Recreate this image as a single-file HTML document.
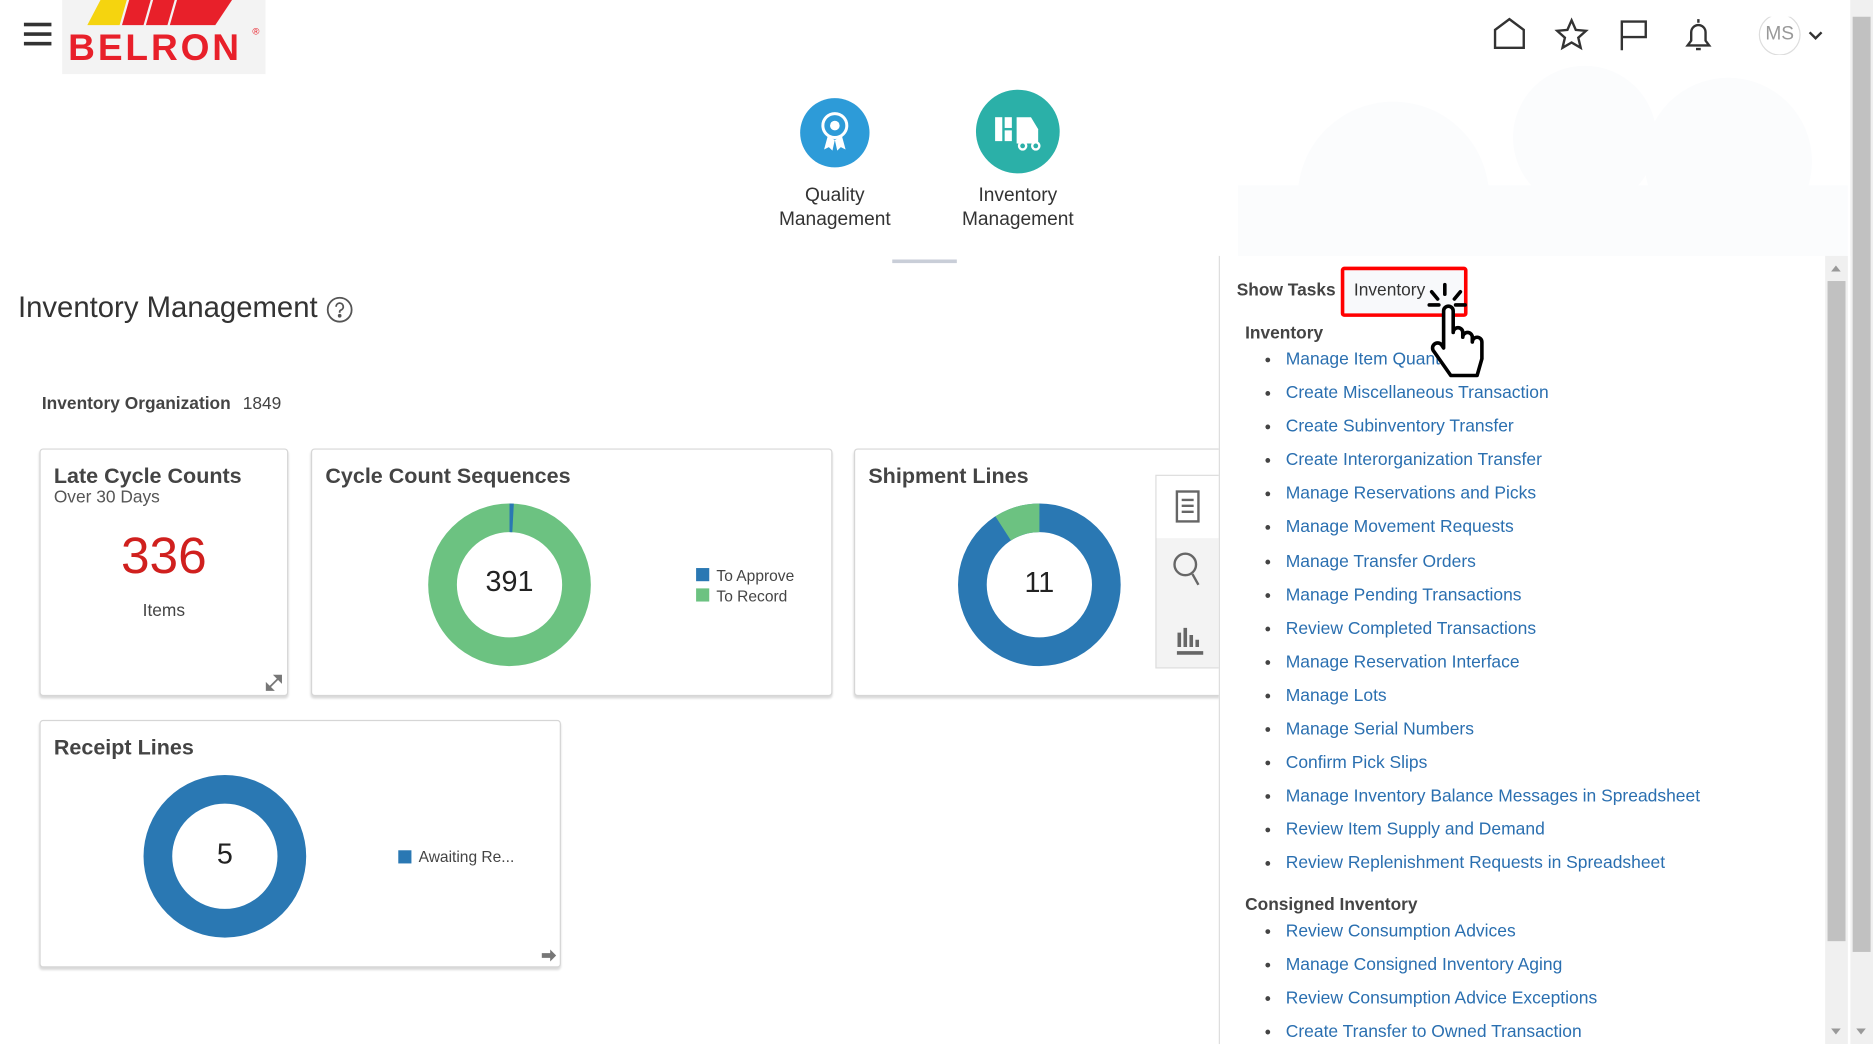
<!DOCTYPE html>
<html><head><meta charset="utf-8">
<style>
html,body{margin:0;padding:0;width:1873px;height:1044px;overflow:hidden;background:#fff}
#w{position:absolute;left:0;top:0;width:1566px;height:873px;transform:scale(1.19604,1.1959);transform-origin:0 0;font-family:"Liberation Sans",Arial,sans-serif;color:#333}
.a{position:absolute}
.card{position:absolute;background:#fff;border:1px solid #d6d6d6;border-radius:3px;box-shadow:0 2px 2px rgba(0,0,0,.15)}
.card h3{margin:0;position:absolute;left:11px;top:12px;font-size:18px;font-weight:bold;color:#444}
ul{margin:0;padding:0;list-style:none}
li{position:relative;height:28.1px;font-size:14.6px;color:#2a6fb0;padding-left:56px;line-height:18px}
li:before{content:"";position:absolute;left:39px;top:7px;width:4px;height:4px;border-radius:50%;background:#444}
.sec{font-size:14.5px;font-weight:bold;color:#444;padding-left:22px;height:22px;line-height:18px}
</style></head><body><div id="w">
<div class="a" style="left:20px;top:19px;width:23px;height:3px;background:#333"></div>
<div class="a" style="left:20px;top:27px;width:23px;height:3px;background:#333"></div>
<div class="a" style="left:20px;top:35px;width:23px;height:3px;background:#333"></div>
<div class="a" style="left:52px;top:0;width:170px;height:62px;background:#f3f3f3"></div>
<svg class="a" style="left:70px;top:0" width="130" height="24"><polygon points="14,0 36,0 30,21 3,21" fill="#f5d40f"/><polygon points="38,0 56,0 50,21 32,21" fill="#e8202a"/><polygon points="58,0 76,0 70,21 52,21" fill="#e8202a"/><polygon points="78,0 124,0 110,21 72,21" fill="#e8202a"/></svg>
<div class="a" style="left:57px;top:22px;font-size:31px;font-weight:bold;color:#e8202a;letter-spacing:2.4px">BELRON</div>
<div class="a" style="left:211px;top:22px;font-size:8px;color:#e8202a">®</div>
<svg class="a" style="left:1248px;top:14px" width="290" height="32" fill="none" stroke="#333" stroke-width="2">
<path d="M2 26V11L14 2L26 11V26Z"/>
<path d="M66 3l3.5 8 8.5.8-6.4 5.7 2 8.5L66 21.5 58.4 26l2-8.5L54 11.8l8.5-.8z"/>
<path d="M108 28V3M108 4h20v13h-20"/>
<path d="M163 24h18l-3-4v-7a6 6 0 0 0-12 0v7zM170 27h4M172 2v3"/>
<circle cx="240" cy="15" r="17" stroke="#ddd" stroke-width="1"/>
<path d="M265 13l5 5 5-5"/>
</svg>
<div class="a" style="left:1476px;top:20px;font-size:16px;color:#999">MS</div>
<div class="a" style="left:1547px;top:0;width:19px;height:873px;background:#f0f0f0"></div>
<div class="a" style="left:1549px;top:14px;width:15px;height:782px;background:#c1c1c1"></div>
<svg class="a" style="left:1025px;top:55px" width="520" height="160"><g fill="#fbfcfd"><circle cx="140" cy="110" r="80"/><circle cx="300" cy="60" r="60"/><circle cx="420" cy="80" r="70"/><rect x="10" y="100" width="510" height="60"/></g></svg>
<svg class="a" style="left:668px;top:80px" width="62" height="62"><circle cx="30" cy="31" r="29" fill="#2d9bd8"/><circle cx="30" cy="25" r="10" fill="none" stroke="#fff" stroke-width="2.5"/><circle cx="30" cy="25" r="4" fill="#fff"/><path d="M24 34l-3 11 4-2 3 3 2-9M36 34l3 11-4-2-3 3-2-9" fill="#fff"/></svg>
<svg class="a" style="left:815px;top:74px" width="72" height="72"><circle cx="36" cy="36" r="35" fill="#2bb0a8"/><rect x="17" y="24" width="6" height="20" fill="#fff"/><rect x="25" y="24" width="6" height="9" fill="#fff"/><rect x="25" y="35" width="6" height="9" fill="#fff"/><path d="M35 24h12l6 10v12H35z" fill="#fff"/><circle cx="40" cy="48" r="3" fill="#2bb0a8" stroke="#fff" stroke-width="2"/><circle cx="51" cy="48" r="3" fill="#2bb0a8" stroke="#fff" stroke-width="2"/></svg>
<div class="a" style="left:628px;top:154px;width:140px;text-align:center;font-size:16px;line-height:20px;color:#333">Quality<br>Management</div>
<div class="a" style="left:781px;top:154px;width:140px;text-align:center;font-size:16px;line-height:20px;color:#333">Inventory<br>Management</div>
<div class="a" style="left:746px;top:217px;width:54px;height:3px;background:#c9ced8"></div>
<div class="a" style="left:15px;top:244px;font-size:24.5px;color:#333">Inventory Management</div>
<svg class="a" style="left:273px;top:248px" width="22" height="22" fill="none" stroke="#555" stroke-width="1.5"><circle cx="11" cy="11" r="10"/><path d="M8 8.5a3 3 0 1 1 4 2.8c-1 .4-1 1-1 2.2"/><circle cx="11" cy="16" r=".8" fill="#555"/></svg>
<div class="a" style="left:35px;top:330px;font-size:14.5px;font-weight:bold;color:#444">Inventory Organization <span style="font-weight:normal;margin-left:6px">1849</span></div>
<div class="card" style="left:33px;top:375px;width:206px;height:205px">
<h3>Late Cycle Counts</h3>
<div class="a" style="left:11px;top:32px;font-size:14.5px;color:#555">Over 30 Days</div>
<div class="a" style="left:0;top:65px;width:206px;text-align:center;font-size:43px;color:#d0201e">336</div>
<div class="a" style="left:0;top:127px;width:206px;text-align:center;font-size:14.5px;color:#444">Items</div>
<svg class="a" style="left:188px;top:188px" width="14" height="14" stroke="#777" stroke-width="1.5" fill="#777"><path d="M3 11L11 3"/><path d="M1 13V8l5 5zM13 1v5L8 1z"/></svg>
</div>
<div class="card" style="left:260px;top:375px;width:434px;height:205px">
<h3>Cycle Count Sequences</h3>
<svg class="a" style="left:95px;top:43px" width="140" height="140"><circle cx="70" cy="70" r="56" fill="none" stroke="#6cc281" stroke-width="24"/><circle cx="70" cy="70" r="56" fill="none" stroke="#2a78b3" stroke-width="24" stroke-dasharray="3 400" transform="rotate(-90 70 70)"/></svg>
<div class="a" style="left:95px;top:97px;width:140px;text-align:center;font-size:24px;color:#222">391</div>
<div class="a" style="left:321px;top:99px;width:11px;height:11px;background:#2a78b3"></div>
<div class="a" style="left:321px;top:116px;width:11px;height:11px;background:#6cc281"></div>
<div class="a" style="left:338px;top:97px;font-size:13px;color:#444;line-height:17px">To Approve<br>To Record</div>
</div>
<div class="card" style="left:714px;top:375px;width:320px;height:205px">
<h3>Shipment Lines</h3>
<svg class="a" style="left:84px;top:43px" width="140" height="140"><circle cx="70" cy="70" r="56" fill="none" stroke="#2a78b3" stroke-width="24"/><circle cx="70" cy="70" r="56" fill="none" stroke="#6cc281" stroke-width="24" stroke-dasharray="32 400" transform="rotate(-122.7 70 70)"/></svg>
<div class="a" style="left:84px;top:98px;width:140px;text-align:center;font-size:24px;color:#222">11</div>
</div>
<div class="a" style="left:966px;top:397px;width:53px;height:160px;background:#f3f3f3;border:1px solid #ddd"></div>
<div class="a" style="left:967px;top:398px;width:52px;height:52px;background:#fff"></div>
<svg class="a" style="left:970px;top:400px" width="48" height="156" fill="none" stroke="#666" stroke-width="2"><rect x="14" y="11" width="18" height="25"/><path d="M18 18h10M18 23h10M18 28h10"/><circle cx="21" cy="72" r="9"/><path d="M27 80l5 9"/><path d="M14 146h22M16 141v-12M21 141v-16M26 141v-10M31 141v-6" stroke-width="3"/></svg>
<div class="card" style="left:33px;top:602px;width:434px;height:205px">
<h3>Receipt Lines</h3>
<svg class="a" style="left:84px;top:43px" width="140" height="140"><circle cx="70" cy="70" r="56" fill="none" stroke="#2a78b3" stroke-width="24"/></svg>
<div class="a" style="left:84px;top:98px;width:140px;text-align:center;font-size:24px;color:#222">5</div>
<div class="a" style="left:299px;top:108px;width:11px;height:11px;background:#2a78b3"></div>
<div class="a" style="left:316px;top:106px;font-size:13px;color:#444">Awaiting Re...</div>
<svg class="a" style="left:418px;top:190px" width="14" height="12" fill="#777"><path d="M1 4h7V1l5 5-5 5V8H1z"/></svg>
</div>
<div class="a" style="left:1019px;top:214px;width:527px;height:659px;background:#fff;border-left:1px solid #ddd"></div>
<div class="a" style="left:1526px;top:214px;width:19px;height:659px;background:#f0f0f0"></div>
<div class="a" style="left:1528px;top:235px;width:15px;height:552px;background:#c1c1c1"></div>
<div class="a" style="left:1531px;top:222px;width:0;height:0;border:4px solid transparent;border-bottom:5px solid #999;border-top:0"></div>
<div class="a" style="left:1531px;top:860px;width:0;height:0;border:4px solid transparent;border-top:5px solid #999;border-bottom:0"></div>
<div class="a" style="left:1552px;top:860px;width:0;height:0;border:4px solid transparent;border-top:5px solid #999;border-bottom:0"></div>
<div class="a" style="left:1034px;top:235px;font-size:14.5px;font-weight:bold;color:#444">Show Tasks</div>
<div class="a" style="left:1121px;top:223px;width:100px;height:36px;border:3px solid #f00;border-radius:3px;background:#f8f9fb"></div>
<div class="a" style="left:1132px;top:235px;font-size:14.5px;color:#333">Inventory</div>
<div class="a" style="left:1019px;top:270px;width:500px">
<div class="sec">Inventory</div>
<ul>
<li>Manage Item Quantities</li>
<li>Create Miscellaneous Transaction</li>
<li>Create Subinventory Transfer</li>
<li>Create Interorganization Transfer</li>
<li>Manage Reservations and Picks</li>
<li>Manage Movement Requests</li>
<li>Manage Transfer Orders</li>
<li>Manage Pending Transactions</li>
<li>Review Completed Transactions</li>
<li>Manage Reservation Interface</li>
<li>Manage Lots</li>
<li>Manage Serial Numbers</li>
<li>Confirm Pick Slips</li>
<li>Manage Inventory Balance Messages in Spreadsheet</li>
<li>Review Item Supply and Demand</li>
<li>Review Replenishment Requests in Spreadsheet</li>
</ul>
<div class="sec" style="margin-top:6px">Consigned Inventory</div>
<ul>
<li>Review Consumption Advices</li>
<li>Manage Consigned Inventory Aging</li>
<li>Review Consumption Advice Exceptions</li>
<li>Create Transfer to Owned Transaction</li>
</ul>
</div>
<svg class="a" style="left:1183px;top:234px" width="62" height="86"><g stroke="#000" stroke-width="3" stroke-linecap="round"><path d="M12 21h8M34 21h8M14 10l5 6M38 10l-5 6M25 4v8"/></g>
<path d="M24 26a4 4 0 0 1 8 0v18a4 4 0 0 1 8 0v4a4 4 0 0 1 8 0v4a4 4 0 0 1 8 0v14l-4 14H30L16 60a4 4 0 0 1 6-6l2 3z" fill="#fff" stroke="#000" stroke-width="3" stroke-linejoin="round"/></svg>
</div></body></html>
